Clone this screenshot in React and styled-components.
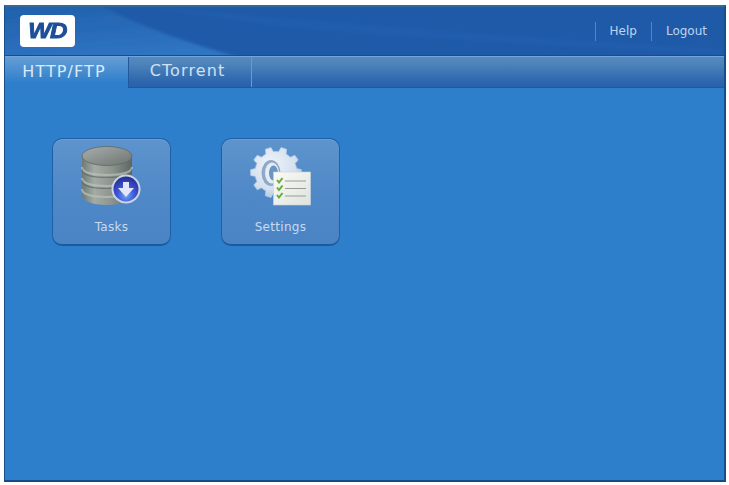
import React from "react";
import styled, { createGlobalStyle } from "styled-components";

const Global = createGlobalStyle`
  html, body { margin: 0; padding: 0; background: #fff; }
  body { font-family: "DejaVu Sans", sans-serif; }
`;
const Page = styled.div`
  width: 729px; height: 485px; box-sizing: border-box; padding: 5px 3px 3px 4px; background: #fff; overflow: hidden;
`;
const Frame = styled.div`
  height: 477px; box-sizing: border-box; display: flex; flex-direction: column;
  border: 1px solid #184f86; border-top: 2px solid #336a9c; border-right: 2px solid #174f8c; border-bottom: 2px solid #174a80;
  background: #2d7ecb;
`;
const Header = styled.header`
  position: relative; height: 49px; flex: none; display: flex; align-items: center; justify-content: space-between;
  padding: 0 17px 0 15px; box-sizing: border-box; overflow: hidden;
  background: #1f5aa8; border-bottom: 1px solid #184c8c;
`;
const Swoosh = styled.svg`
  position: absolute; inset: 0; width: 100%; height: 100%;
`;
const Logo = styled.div`
  position: relative; width: 55px; height: 32px; border-radius: 4px; background: #fff; display: flex; align-items: center; justify-content: center;
  font: italic 900 22px "Liberation Sans", sans-serif; letter-spacing: -1px; color: #1d4f98; -webkit-text-stroke: 0.9px #1d4f98;
`;
const LogoMark = styled.span`
  display: block; transform: scaleX(1.1);
`;
const Links = styled.nav`
  position: relative; display: flex; align-items: center; font-size: 12px; color: #bcd5ef;
`;
const LinkItem = styled.a`
  height: 19px; line-height: 19px; padding-left: 14px; margin-left: 14px; border-left: 1px solid #4d87c4;
`;
const TabBar = styled.nav`
  height: 32px; flex: none; box-sizing: border-box; display: flex;
  background: linear-gradient(#5589bf 0, #4f84bb 20%, #2c65ae 85%, #2a62aa 100%);
  border-top: 1px solid #74a5d8; border-bottom: 1px solid #1e5a9c;
`;
const Tab = styled.div`
  width: ${p => p.$w}px; box-sizing: border-box; display: flex; align-items: center; justify-content: center;
  font-size: 16px; letter-spacing: 1.1px; padding: 0 5px 3px 0;
  color: ${p => p.$active ? "#dbe9f7" : "#cfe1f4"};
  margin-bottom: ${p => p.$active ? "-1px" : "0"};
  background: ${p => p.$active ? "linear-gradient(#659ed6, #2d7ecb 85%)" : "transparent"};
  border-right: 1px solid ${p => p.$active ? "#1e5a9c" : "#6a9bd0"};
`;
const Content = styled.main`
  flex: 1; display: flex; align-items: flex-start; gap: 50px; padding: 50px 0 0 47px;
`;
const Card = styled.button`
  width: 119px; height: 108px; box-sizing: border-box; border: 1px solid #1f5fa5; border-bottom: 2px solid #1c5a9e; border-radius: 10px; padding: 0;
  background: linear-gradient(#5d94cd, #4f88c7 55%, #4a84c5); display: flex; flex-direction: column; align-items: center;
  font-family: "DejaVu Sans", sans-serif; font-size: 12px; letter-spacing: 0.3px; color: #c6dbf1;
  box-shadow: inset 0 1px 0 #6a9fd4;
`;
const IconWrap = styled.div`
  height: 80px; width: 100%; display: flex; justify-content: center; align-items: flex-start; padding-top: 6px; box-sizing: border-box;
`;
const Label = styled.span`
  margin-top: 1px;
`;

const Database = () => (
  <svg width="64" height="64" viewBox="0 0 64 64">
    <defs>
      <linearGradient id="dbBody" x1="0" x2="1" y1="0" y2="0">
        <stop offset="0" stopColor="#6d7a78" /><stop offset=".25" stopColor="#a4aba4" /><stop offset=".6" stopColor="#8d948e" /><stop offset="1" stopColor="#5c6664" />
      </linearGradient>
      <linearGradient id="dbTop" x1="0" x2="1" y1="0" y2="1">
        <stop offset="0" stopColor="#a9aeab" /><stop offset="1" stopColor="#6d7472" />
      </linearGradient>
      <radialGradient id="badge" cx=".5" cy=".75" r=".75">
        <stop offset="0" stopColor="#6fa6f4" /><stop offset=".45" stopColor="#3f58d6" /><stop offset="1" stopColor="#232c8e" />
      </radialGradient>
    </defs>
    <path d="M2 11 V50 C2 56 12 60 27 60 C42 60 52 56 52 50 V11 Z" fill="url(#dbBody)" />
    <g fill="none" stroke="#bcc2bb" strokeWidth="2" opacity=".7">
      <path d="M2 22 C2 28 15 30 27 30 C39 30 52 28 52 22" />
      <path d="M2 33 C2 39 15 41 27 41 C39 41 52 39 52 33" />
      <path d="M2 44 C2 50 15 52 27 52 C39 52 52 50 52 44" />
    </g>
    <g fill="none" stroke="#5e6866" strokeWidth="1.2" opacity=".7">
      <path d="M2 24.5 C2 30.5 15 32.5 27 32.5 C39 32.5 52 30.5 52 24.5" />
      <path d="M2 35.5 C2 41.5 15 43.5 27 43.5 C39 43.5 52 41.5 52 35.5" />
    </g>
    <ellipse cx="27" cy="11" rx="25" ry="9.5" fill="url(#dbTop)" stroke="#5f6866" strokeWidth=".8" />
    <circle cx="46" cy="44" r="14.5" fill="#c9d3e8" />
    <circle cx="46" cy="44" r="12.5" fill="url(#badge)" />
    <path d="M43 37 h6 v6 h5 L46 52 L38 43 h5 Z" fill="#e3e6fa" />
  </svg>
);

const gearPath = (() => {
  const cx = 27, cy = 27.5, teeth = 10, out = 25.5, inn = 21;
  let d = "";
  for (let i = 0; i < teeth; i++) {
    const a = (i / teeth) * Math.PI * 2;
    const s = (Math.PI * 2) / teeth;
    const pts = [[inn, a - s * 0.5], [inn, a - s * 0.3], [out, a - s * 0.18], [out, a + s * 0.18], [inn, a + s * 0.3]];
    pts.forEach(([r, t], j) => {
      const x = (cx + r * Math.cos(t)).toFixed(1), y = (cy + r * Math.sin(t)).toFixed(1);
      d += (i === 0 && j === 0 ? "M" : "L") + x + " " + y + " ";
    });
  }
  return d + "Z";
})();

const Gear = () => (
  <svg width="64" height="64" viewBox="0 0 64 64">
    <defs>
      <radialGradient id="gear" cx=".4" cy=".35" r=".75">
        <stop offset="0" stopColor="#eef3f9" /><stop offset=".65" stopColor="#d3e0ef" /><stop offset="1" stopColor="#9fbcdc" />
      </radialGradient>
      <linearGradient id="sheet" x1="0" x2="1" y1="0" y2="1">
        <stop offset="0" stopColor="#fbfbf6" /><stop offset="1" stopColor="#dde2dd" />
      </linearGradient>
    </defs>
    <path fill="url(#gear)" stroke="#b4cbe4" strokeWidth=".8" strokeLinejoin="round" d={gearPath} />
    <ellipse cx="22" cy="28" rx="9.5" ry="13" fill="#8fa9c6" />
    <ellipse cx="23" cy="28" rx="7" ry="10.5" fill="#e4ecf4" />
    <ellipse cx="24.5" cy="28" rx="4.5" ry="7.5" fill="#6a94c2" />
    <rect x="24.5" y="27" width="37" height="33" fill="url(#sheet)" stroke="#c9d4dc" strokeWidth=".6" />
    <g stroke="#8c9490" strokeWidth=".9">
      <path d="M36 36 H57" /><path d="M36 43.5 H57" /><path d="M36 51 H57" />
    </g>
    <g fill="none" stroke="#64ad38" strokeWidth="2">
      <path d="M28 35 l2 2.5 l3.5 -4.5" /><path d="M28 42.5 l2 2.5 l3.5 -4.5" /><path d="M28 50 l2 2.5 l3.5 -4.5" />
    </g>
  </svg>
);

export default function App() {
  return (
    <Page>
      <Global />
      <Frame>
        <Header>
          <Swoosh viewBox="0 0 720 48" preserveAspectRatio="none">
            <defs>
              <linearGradient id="sw" x1="0" y1="0" x2="0.4" y2="1">
                <stop offset="0" stopColor="#1f5faa" /><stop offset="1" stopColor="#2f74c2" />
              </linearGradient>
              <filter id="soft"><feGaussianBlur stdDeviation="1.5" /></filter>
            </defs>
            <path d="M-4 -4 H90 C135 20 190 38 240 52 H-4 Z" fill="url(#sw)" filter="url(#soft)" />
            <path d="M140 0 C300 12 480 30 720 42 V48 C480 34 300 26 240 14 Z" fill="#2462b2" opacity=".45" filter="url(#soft)" />
          </Swoosh>
          <Logo><LogoMark>WD</LogoMark></Logo>
          <Links>
            <LinkItem>Help</LinkItem>
            <LinkItem>Logout</LinkItem>
          </Links>
        </Header>
        <TabBar>
          <Tab $active $w={124}>HTTP/FTP</Tab>
          <Tab $w={123}>CTorrent</Tab>
        </TabBar>
        <Content>
          <Card>
            <IconWrap><Database /></IconWrap>
            <Label>Tasks</Label>
          </Card>
          <Card>
            <IconWrap><Gear /></IconWrap>
            <Label>Settings</Label>
          </Card>
        </Content>
      </Frame>
    </Page>
  );
}
